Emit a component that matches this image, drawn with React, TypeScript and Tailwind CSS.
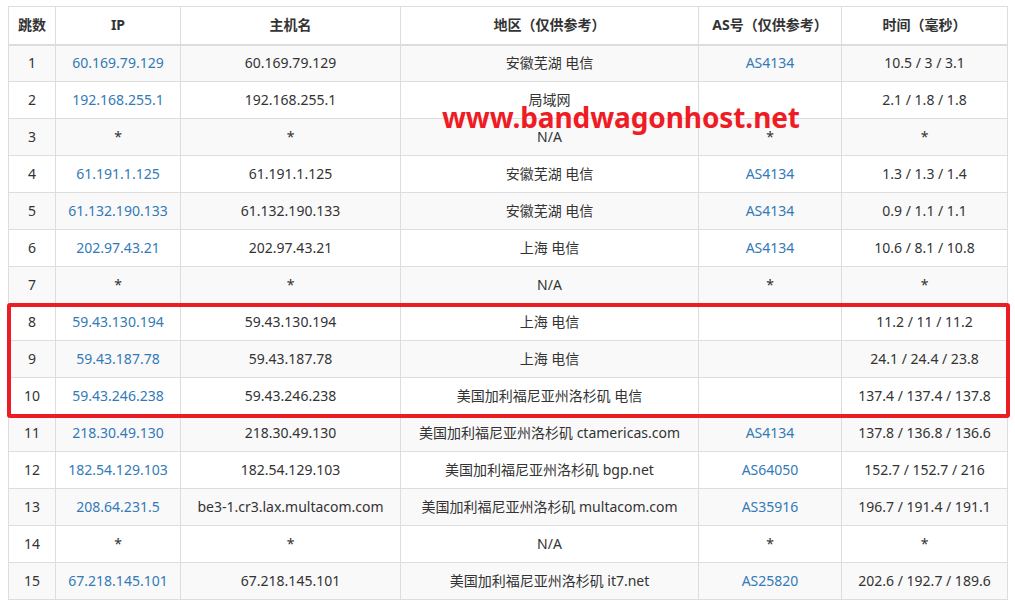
import React from "react";

type Row = {
  hop: string;
  ip: string;
  host: string;
  region: string;
  as: string;
  time: string;
};

const rows: Row[] = [
  { hop: "1", ip: "60.169.79.129", host: "60.169.79.129", region: "安徽芜湖 电信", as: "AS4134", time: "10.5 / 3 / 3.1" },
  { hop: "2", ip: "192.168.255.1", host: "192.168.255.1", region: "局域网", as: "", time: "2.1 / 1.8 / 1.8" },
  { hop: "3", ip: "*", host: "*", region: "N/A", as: "*", time: "*" },
  { hop: "4", ip: "61.191.1.125", host: "61.191.1.125", region: "安徽芜湖 电信", as: "AS4134", time: "1.3 / 1.3 / 1.4" },
  { hop: "5", ip: "61.132.190.133", host: "61.132.190.133", region: "安徽芜湖 电信", as: "AS4134", time: "0.9 / 1.1 / 1.1" },
  { hop: "6", ip: "202.97.43.21", host: "202.97.43.21", region: "上海 电信", as: "AS4134", time: "10.6 / 8.1 / 10.8" },
  { hop: "7", ip: "*", host: "*", region: "N/A", as: "*", time: "*" },
  { hop: "8", ip: "59.43.130.194", host: "59.43.130.194", region: "上海 电信", as: "", time: "11.2 / 11 / 11.2" },
  { hop: "9", ip: "59.43.187.78", host: "59.43.187.78", region: "上海 电信", as: "", time: "24.1 / 24.4 / 23.8" },
  { hop: "10", ip: "59.43.246.238", host: "59.43.246.238", region: "美国加利福尼亚州洛杉矶 电信", as: "", time: "137.4 / 137.4 / 137.8" },
  { hop: "11", ip: "218.30.49.130", host: "218.30.49.130", region: "美国加利福尼亚州洛杉矶 ctamericas.com", as: "AS4134", time: "137.8 / 136.8 / 136.6" },
  { hop: "12", ip: "182.54.129.103", host: "182.54.129.103", region: "美国加利福尼亚州洛杉矶 bgp.net", as: "AS64050", time: "152.7 / 152.7 / 216" },
  { hop: "13", ip: "208.64.231.5", host: "be3-1.cr3.lax.multacom.com", region: "美国加利福尼亚州洛杉矶 multacom.com", as: "AS35916", time: "196.7 / 191.4 / 191.1" },
  { hop: "14", ip: "*", host: "*", region: "N/A", as: "*", time: "*" },
  { hop: "15", ip: "67.218.145.101", host: "67.218.145.101", region: "美国加利福尼亚州洛杉矶 it7.net", as: "AS25820", time: "202.6 / 192.7 / 189.6" },
];

const cell = "border border-[#ddd] h-[37px] px-2 py-0 text-center align-middle leading-5";

export default function App() {
  return (
    <div
      className="relative w-[1015px] h-[606px] bg-white text-[14px] text-[#333] overflow-hidden"
      style={{ fontFamily: '"Noto Sans", "Noto Sans CJK SC", sans-serif' }}
    >
      <div className="pt-[6px] pl-[8px]">
        <table className="table-fixed border-collapse w-[999px]">
          <colgroup>
            <col className="w-[47px]" />
            <col className="w-[125px]" />
            <col className="w-[220px]" />
            <col className="w-[298px]" />
            <col className="w-[143px]" />
            <col className="w-[166px]" />
          </colgroup>
          <thead>
            <tr>
              {["跳数", "IP", "主机名", "地区（仅供参考）", "AS号（仅供参考）", "时间（毫秒）"].map((h) => (
                <th key={h} className="border border-[#ddd] border-b-2 h-[38px] px-2 text-center font-bold leading-5">
                  {h}
                </th>
              ))}
            </tr>
          </thead>
          <tbody>
            {rows.map((r, i) => (
              <tr key={r.hop} className={i % 2 === 0 ? "bg-[#f9f9f9]" : "bg-white"}>
                <td className={cell}>{r.hop}</td>
                <td className={`${cell} ${r.ip === "*" ? "" : "text-[#337ab7]"}`}>{r.ip}</td>
                <td className={cell}>{r.host}</td>
                <td className={cell}>{r.region}</td>
                <td className={`${cell} ${r.as === "*" ? "" : "text-[#337ab7]"}`}>{r.as}</td>
                <td className={cell}>{r.time}</td>
              </tr>
            ))}
          </tbody>
        </table>
      </div>

      {/* highlight box over hops 8-10 */}
      <div className="absolute left-[7px] top-[303px] w-[1003px] h-[115px] border-4 border-[#ec1c24] rounded-[3px] pointer-events-none" />

      {/* watermark */}
      <div className="absolute left-[442px] top-[99px] text-[28px] leading-9 font-bold tracking-[-0.1px] text-[#ee1c25]">
        www.bandwagonhost.net
      </div>
    </div>
  );
}
